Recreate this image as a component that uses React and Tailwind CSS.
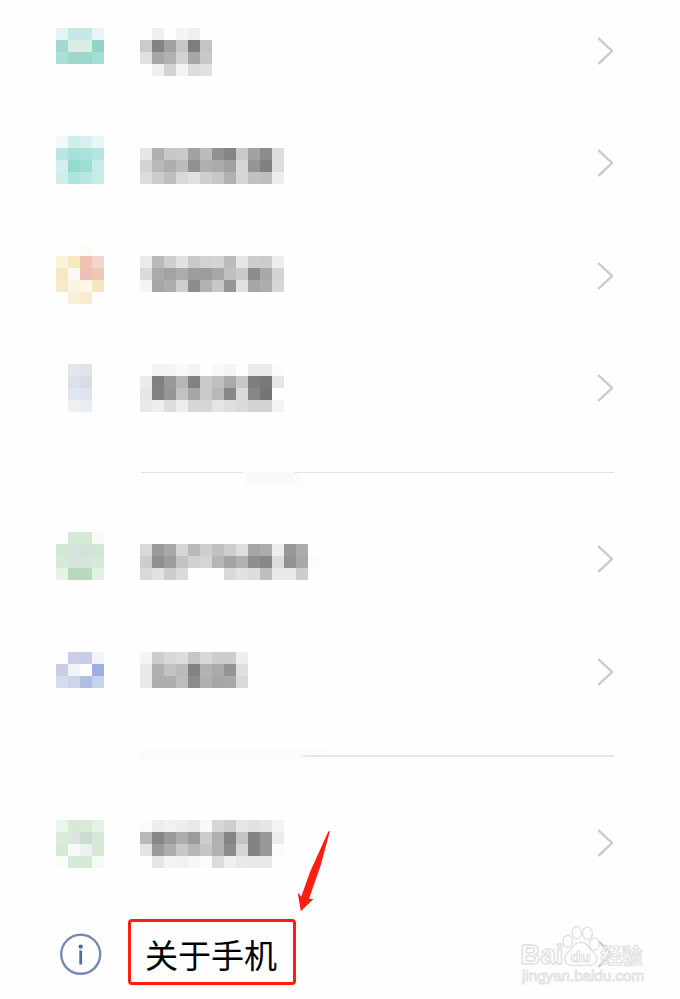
// each mosaic row is a list of 12px cells, two digits for a grey and six for a colour
const groups = [
  [
    {
      id: "battery",
      box: "h-[113px]",
      offset: "pt-[34px]",
      icon: ["e3f5f3 c5e8e6 c5e8e5 e8f5f4", "a3dacf d9ede3 d9ede3 8ed5c8", "aadfd4 9dd8cb 9ed8cc a6ddd7"],
      label: ["fe ef fe f4 ef fe", "cb 83 a1 c7 7d c4", "e0 a6 b2 d3 a7 c8", "fe f0 d3 f3 dc e0"],
    },
    {
      id: "apps",
      box: "h-[112px]",
      offset: "pt-[29px]",
      icon: ["f0f9f9 ceeee9 d6f1ed e7f6f5", "b9e6e1 a9e1da ace2db b4e5df", "d5efed 93dad0 9eddd5 c8ebe8", "ceeee9 b2e4de b8e7e1 c8ece6"],
      label: ["", "e7 b0 c7 c9 a2 bc 91 85 c9 a2 8c dd", "d4 b8 ae bc 91 af aa a1 d6 95 81 de", "dd cb be d9 e1 cf c7 b1 d6 c1 be ee"],
    },
    {
      id: "privacy",
      box: "h-[113px]",
      offset: "pt-[25px]",
      icon: ["fefefe fefdf9 fefaf5 fefefe", "faf2da f7e8c0 efc4ae f2d5d0", "f7e8c1 fdf8f6 edc1b6 efc7b5", "f8e9cd fbf5e2 fcf7e9 f6e7bf", "fefefe f9efda f9ecd2 fefefe"],
      label: ["", "ea b9 cf e2 c9 d2 d4 bc e7 cd cb ee", "da aa a3 ac 9d 9d a8 c0 ca 8d a9 d3", "f5 a6 ae cf 8d b2 c7 95 e1 a6 ae d6"],
    },
    {
      id: "security",
      box: "h-[112px]",
      offset: "pt-[32px]",
      icon: ["fefefe e6e7ec e2e3e9 fefefe", "fefefe dce0ea d8dce6 fefefe", "fefefe dfe6ef dce4ed fefefe", "fefefe eef0f4 e9ecf2 fefefe"],
      label: ["fe f4 f5 f9 f4 fe f9 f5 fd eb eb fc", "eb 81 98 b6 82 c9 bf aa c8 7e 79 e7", "e7 82 96 c2 a6 ca b8 87 db 87 75 fe", "e8 ed dd ec d6 d6 e5 de da d3 d3 f3"],
    },
  ],
  [
    {
      id: "accounts",
      box: "h-[112px]",
      offset: "pt-[29px]",
      icon: ["fdfefd d6ead7 d6ead7 f8fcf9", "d1e8d3 d6e3db d5e2da d0e8d2", "d5e9d6 d7e4de d7e4dd d3ead6", "e6f3e7 b9d8c0 b9d8c0 e2efe3"],
      label: ["", "d9 9a a8 d6 b8 ce c1 ce de a5 ac ee 97 ab", "cd 90 9d c3 d0 d5 b6 a4 b1 8f 88 dc 92 a9 fb", "d9 e2 cd da fe fe fe d9 e2 dd be e9 e9 cd"],
    },
    {
      id: "cloud",
      box: "h-[113px]",
      offset: "pt-[37px]",
      icon: ["fefefe c8d0e9 c6cee8 f2f5fa", "c8cee8 f0f3f8 ffffff 9daedf", "d6dbef cdd5e9 afbee4 c6d3ec"],
      label: ["f5 cd d8 dc c6 d7 cd cd ee", "e8 af c2 bb 82 b2 aa 94 df", "e8 ae ae bd 8c b0 a5 a9 d9"],
    },
  ],
  [
    {
      id: "system",
      box: "h-[113px]",
      offset: "pt-[34px]",
      icon: ["eaf5ec d6ead6 d7ebd8 e5f3e6", "d7ebd7 dce6df caddd0 d6e9d9", "d5e9d6 f6f9f8 ecf3ef d6ead6", "fbfdfb d6ead8 d6ead7 f5faf7"],
      label: ["fb ed f1 ed e8 f8 d6 cf e6 e2 e6 f3", "b9 86 9a ac 9c cc b0 84 c4 83 98 ec", "e4 99 ad c8 b7 c5 b1 8c d6 83 98 fb", "fe e6 f4 f2 f7 fb dc ef e9 e8 e8 fe"],
    },
  ],
];

function Mosaic({ rows }) {
  return (
    <div className="flex flex-col">
      {rows.map((row, y) => (
        <div key={y} className="flex h-3">
          {row.split(" ").filter(Boolean).map((cell, x) => (
            <span
              key={x}
              className="h-3 w-3 shrink-0"
              style={{ backgroundColor: `#${cell.length === 2 ? cell + cell + cell : cell}` }}
            />
          ))}
        </div>
      ))}
    </div>
  );
}

function Chevron() {
  return (
    <svg className="block h-7 w-[18px]" viewBox="0 0 18 28" fill="none" stroke="#c9c9c9" strokeWidth="2.3">
      <path d="M1.300 1.100 15 14 1.300 26.900" />
    </svg>
  );
}

function SettingRow({ item }) {
  return (
    <div className={`flex pr-[65px] pl-14 ${item.box}`}>
      <div className={`w-[84px] ${item.offset}`}>
        <Mosaic rows={item.icon} />
      </div>
      <div className={`flex-1 ${item.offset}`}>
        <Mosaic rows={item.label} />
      </div>
      <div className="self-center">
        <Chevron />
      </div>
    </div>
  );
}

function InfoIcon() {
  return (
    <svg className="h-[42px] w-[42px]" viewBox="0 0 42 42">
      <circle cx="20.7" cy="21.3" r="19.5" fill="none" stroke="#7689b3" strokeWidth="2.4" />
      <circle cx="20.7" cy="13.6" r="2.2" fill="#566b9d" />
      <path d="M20.7 17.500V31.500" stroke="#566b9d" strokeWidth="2.8" />
    </svg>
  );
}

function Arrow() {
  return (
    <svg className="absolute top-[829px] left-[296px] h-[84px] w-9" viewBox="0 0 36 84">
      <path d="M32.400 2.200 33.800 2.600 24.500 37 13 69.800 17.500 70 4.800 82.300 1.700 63.800 5.300 67.500 14 43Z" fill="#ff1f12" />
    </svg>
  );
}

function Watermark() {
  return (
    <svg className="absolute top-[922px] left-[516px] h-[68px] w-[136px]" viewBox="0 0 136 68">
      <g fill="#ffffff" stroke="#e0e0e0" strokeWidth="1.3" strokeLinejoin="round">
        <text x="4.500" y="41.500" fontFamily="Liberation Sans, sans-serif" fontWeight="700" fontSize="27" textLength="43" lengthAdjust="spacingAndGlyphs">Bai</text>
        <ellipse cx="51.7" cy="19.3" rx="4.7" ry="6.2" />
        <ellipse cx="60.7" cy="10.700" rx="4.700" ry="6.200" />
        <ellipse cx="71.400" cy="11.300" rx="4.900" ry="6.200" />
        <ellipse cx="78.300" cy="22.300" rx="4.900" ry="6.200" />
        <path d="M64.500 20.300c-5 0-7 3-9.500 7-2.500 3-6 5-6 9.500 0 4.500 3 6.500 7 6.500h17.500c4.500 0 7.500-2 7.500-6.500s-4-6.500-6.500-9.500c-3-4-5-7-10-7Z" />
        <text x="54.500" y="39.500" fontFamily="Liberation Sans, sans-serif" fontWeight="700" fontSize="15.500" strokeWidth="1.100" textLength="20" lengthAdjust="spacingAndGlyphs">du</text>
        <text x="84.500" y="41" fontFamily="Noto Sans CJK SC, sans-serif" fontWeight="700" fontSize="21" strokeWidth="1.100" textLength="42" lengthAdjust="spacingAndGlyphs" fillOpacity="0.65">经验</text>
        <text x="6" y="59" fontFamily="Liberation Sans, sans-serif" fontSize="14.500" stroke="#e3e3e3" strokeWidth="1" textLength="122" lengthAdjust="spacingAndGlyphs">jingyan.baidu.com</text>
      </g>
    </svg>
  );
}

function AboutPhone() {
  return (
    <div className="flex h-[113px] items-start pr-[65px] pl-[60px]">
      <div className="w-[68px] pt-[34px]">
        <InfoIcon />
      </div>
      <div className="mt-5 flex h-[66px] w-[168px] items-center rounded-[4px] border-[3px] border-[#ff1f12] pl-[14px]">
        <span className="pt-[5px] font-['Noto_Sans_CJK_SC',sans-serif] text-[33px] leading-none whitespace-nowrap text-black">
          关于手机
        </span>
      </div>
      <div className="ml-auto pt-[41px]">
        <Chevron />
      </div>
    </div>
  );
}

export default function App() {
  return (
    <main className="relative h-[999px] w-[680px] overflow-hidden bg-[#fefefe]">
      <div className="-mt-1.5">
        {groups[0].map((item) => (
          <SettingRow key={item.id} item={item} />
        ))}
        <svg className="block h-[59px] w-full" viewBox="0 0 680 59">
          <path d="M141 28.500H243M294 28.500H614" stroke="#e2e2e2" strokeWidth="1.2" />
          <path d="M243 28H294L306 40H246Z" fill="#fafafa" />
          <path d="M246 40H306L318 46H256Z" fill="#fcfcfc" />
        </svg>
        {groups[1].map((item) => (
          <SettingRow key={item.id} item={item} />
        ))}
        <svg className="block h-[58px] w-full" viewBox="0 0 680 58">
          <path d="M140 20H340L286 32H140Z" fill="#fbfbfb" />
          <path d="M300 28.500 308 27H614V29H302Z" fill="#e6e6e6" />
        </svg>
        {groups[2].map((item) => (
          <SettingRow key={item.id} item={item} />
        ))}
        <AboutPhone />
      </div>
      <Arrow />
      <Watermark />
    </main>
  );
}
